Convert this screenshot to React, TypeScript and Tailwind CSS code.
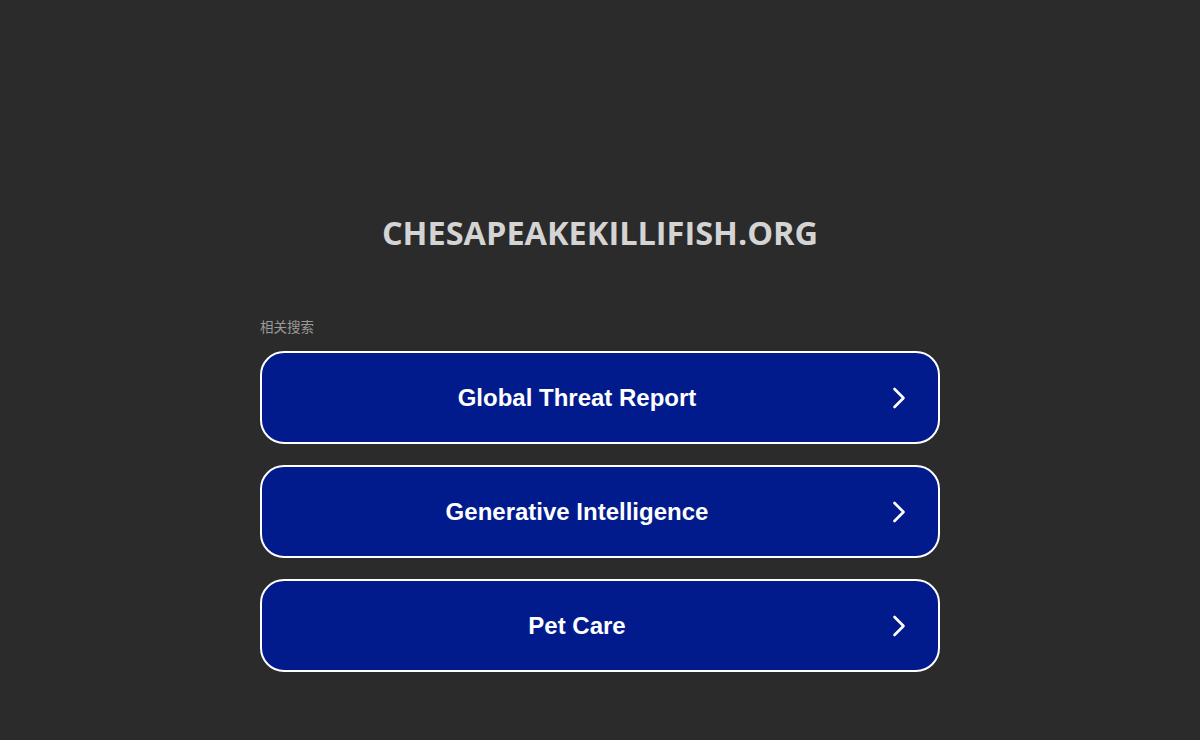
const links = ["Global Threat Report", "Generative Intelligence", "Pet Care"];

function Chevron() {
  return (
    <svg width="14" height="22" viewBox="0 0 14 22" fill="none" className="shrink-0">
      <path d="M2.5 2 L11.5 11 L2.5 20" stroke="white" strokeWidth="2.6" strokeLinecap="round" strokeLinejoin="round" />
    </svg>
  );
}

export default function App() {
  return (
    <div className="min-h-[740px] w-full bg-[#2b2b2b] font-['Liberation_Sans',Arial,sans-serif]">
      <div className="mx-auto w-[680px] pt-[213px]">
        <h1 className="text-center font-['Open_Sans',sans-serif] text-[32.5px] font-bold leading-[40px] text-[#d4d4d4]">
          CHESAPEAKEKILLIFISH.ORG
        </h1>
        <p className="mt-[63px] font-['Noto_Sans_CJK_SC',sans-serif] text-[13.5px] leading-[20px] text-[#9a9a9a]">相关搜索</p>
        <div className="mt-[15px] flex flex-col gap-[21px]">
          {links.map((l) => (
            <a
              key={l}
              href="#"
              className="flex h-[93px] items-center rounded-[24px] border-2 border-white bg-[#021b8c] pr-[32px] text-white"
            >
              <span className="flex-1 text-center text-[24px] font-bold leading-none">{l}</span>
              <Chevron />
            </a>
          ))}
        </div>
      </div>
    </div>
  );
}
